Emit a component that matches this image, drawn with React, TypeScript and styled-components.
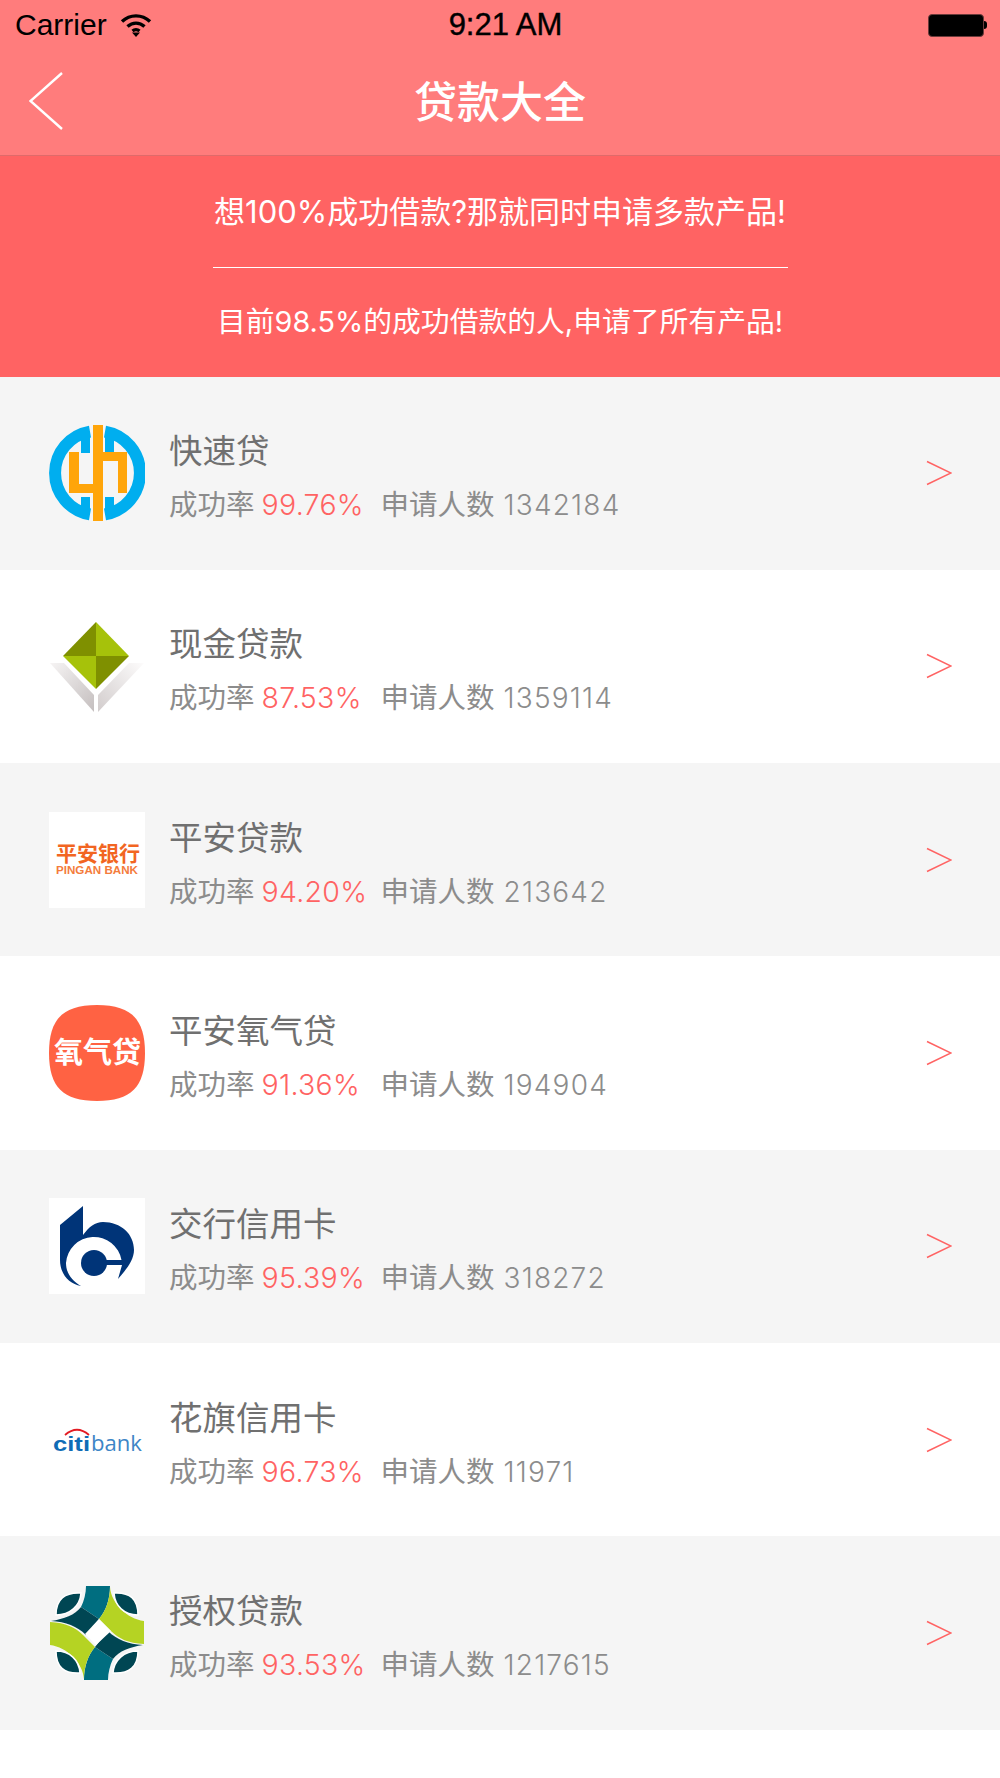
import { FC, ReactNode } from "react";
import styled, { createGlobalStyle } from "styled-components";

const CJK = `"Noto Sans CJK SC", sans-serif`;

const GlobalStyle = createGlobalStyle`
  html, body {
    margin: 0;
    padding: 0;
    background: #fff;
  }
`;

const Page = styled.div`
  width: 1000px;
  height: 1778px;
  overflow: hidden;
  background: #fff;
  font-family: Inter, ${CJK};
`;

const Header = styled.header`
  background: #ff7c7c;
  border-bottom: 1px solid #df6a6a;
`;

const StatusBar = styled.div`
  height: 50px;
  padding: 0 13px 0 15px;
  display: grid;
  grid-template-columns: 1fr auto 1fr;
  align-items: center;
  color: #000;
  font-family: "Liberation Sans", sans-serif;
  font-size: 30px;
`;

const Carrier = styled.div`
  display: flex;
  align-items: center;
  gap: 13px;
`;

const Clock = styled.div`
  font-size: 31px;
  margin-left: 9px;
  -webkit-text-stroke: 0.4px #000;
`;

const Battery = styled.div`
  justify-self: end;
  display: flex;
  align-items: center;
`;

const BatteryBody = styled.div`
  box-sizing: border-box;
  width: 56px;
  height: 23px;
  background: #000;
  border: 1px solid #6b3a3a;
  border-radius: 4px;
`;

const BatteryCap = styled.div`
  width: 3px;
  height: 8px;
  background: #000;
  border-radius: 0 3px 3px 0;
`;

const NavBar = styled.div`
  height: 105px;
  padding: 0 0 8px 29px;
  box-sizing: border-box;
  display: grid;
  grid-template-columns: 1fr auto 1fr;
  align-items: center;
`;

const BackSlot = styled.div`
  display: flex;
  padding-top: 5px;
`;

const Title = styled.h1`
  margin: 0;
  color: #fff;
  font-family: ${CJK};
  font-size: 43px;
  font-weight: 500;
  line-height: 60px;
  margin-left: -29px;
`;

const Banner = styled.section`
  box-sizing: border-box;
  height: 220.5px;
  padding-top: 27px;
  background: #ff6363;
  color: #fff;
  display: flex;
  flex-direction: column;
  align-items: center;
`;

const BannerLine = styled.div<{ $size: number }>`
  height: 58px;
  line-height: 58px;
  font-size: ${(p) => p.$size}px;
  font-weight: 400;
  white-space: nowrap;
`;

const Divider = styled.hr`
  width: 575px;
  height: 1px;
  margin: 26px 0 25px;
  border: 0;
  background: #fff;
`;

const List = styled.ul`
  margin: 0;
  padding: 0;
  list-style: none;
`;

const Row = styled.li`
  height: 193.33px;
  box-sizing: border-box;
  padding: 0 48px 0 49px;
  display: flex;
  align-items: center;
  &:nth-child(odd) {
    background: #f5f5f5;
  }
  &:nth-child(even) {
    background: #fff;
  }
`;

const Logo = styled.div`
  width: 96px;
  height: 96px;
  flex: none;
  svg {
    display: block;
  }
`;

const Info = styled.div`
  flex: 1;
  margin-left: 25px;
  padding-top: 8px;
`;

const Name = styled.div`
  color: #707070;
  font-family: ${CJK};
  font-size: 33.5px;
  line-height: 48px;
  margin-left: -1px;
`;

const Stats = styled.div`
  margin-top: 8px;
  display: flex;
  align-items: baseline;
  color: #8c8c8c;
  font-size: 28.5px;
  line-height: 48px;
  margin-left: -1px;
`;

const Rate = styled.span`
  width: 119px;
  color: #ff6363;
  margin-left: 7px;
  font-size: 28.5px;
  font-weight: 300;
  letter-spacing: 0.3px;
`;

const Count = styled.span`
  margin-left: 9px;
  font-size: 28px;
  font-weight: 300;
  letter-spacing: 1.2px;
`;

const WifiIcon = () => (
  <svg width="32" height="24" viewBox="0 0 32 24" fill="none" stroke="#000" strokeWidth="3.4">
    <path d="M2 8.5C10 1 22 1 30 8.5" />
    <path d="M7.5 13.5C12.5 9 19.5 9 24.5 13.5" />
    <path d="M12.5 18C14.5 16.4 17.5 16.4 19.5 18" />
    <path d="M16 24l-4-4.5h8z" fill="#000" stroke="none" />
  </svg>
);

const BackIcon = () => (
  <svg width="34" height="58" viewBox="0 0 34 58" fill="none" stroke="#fff" strokeWidth="2.4">
    <path d="M33 1L1.5 29L33 57" />
  </svg>
);

const ArrowIcon = () => (
  <svg width="26" height="26" viewBox="0 0 26 26" fill="none" stroke="#ff6363" strokeWidth="1.5">
    <path d="M1 1.5L25 13L1 24.5" />
  </svg>
);

const KuaisuLogo = () => (
  <svg width="96" height="96" viewBox="0 0 96 96">
    <g fill="none" stroke="#00aeef" strokeWidth="12">
      <path d="M41 6.6A42 42 0 0 0 41 89.4" />
      <path d="M56 6.6A42 42 0 0 1 56 89.4" />
    </g>
    <path
      fill="#00aeef"
      d="M32 8h9v20h-9zM32 72h9v16h-9zM56 8h9v20h-9zM56 72h9v16h-9z"
    />
    <path
      fill="#ffa50a"
      d="M44 0h10v27h24v41h-9V36H54v60H44V68H20V27h10v32h14z"
    />
  </svg>
);

const DiamondLogo = () => (
  <svg width="96" height="96" viewBox="0 0 96 96">
    <defs>
      <linearGradient id="wingL" x1="0" y1="0" x2="1" y2="1">
        <stop offset="0" stopColor="#f6f4f4" />
        <stop offset="1" stopColor="#c4bebe" />
      </linearGradient>
      <linearGradient id="wingR" x1="1" y1="0" x2="0" y2="1">
        <stop offset="0" stopColor="#fdfcfc" />
        <stop offset="1" stopColor="#d2cccc" />
      </linearGradient>
    </defs>
    <path fill="url(#wingL)" d="M1 45H15L45 77V94Z" />
    <path fill="url(#wingR)" d="M95 45H80L49 77V94Z" />
    <path fill="#7f9000" d="M47 4V38H14Z" />
    <path fill="#a6c20a" d="M47 4V38H80Z" />
    <path fill="#a6c20a" d="M14 38H47V71Z" />
    <path fill="#7f9000" d="M80 38H47V71Z" />
  </svg>
);

const PinganLogo = () => (
  <svg width="96" height="96" viewBox="0 0 96 96">
    <rect width="96" height="96" fill="#fff" />
    <text
      x="7"
      y="49"
      fill="#f26522"
      fontFamily={CJK}
      fontSize="21"
      fontWeight="700"
      textLength="84"
      lengthAdjust="spacingAndGlyphs"
    >
      平安银行
    </text>
    <text
      x="7"
      y="62"
      fill="#f47c3c"
      fontFamily="Liberation Sans, sans-serif"
      fontSize="10"
      fontWeight="700"
      textLength="82"
      lengthAdjust="spacingAndGlyphs"
    >
      PINGAN BANK
    </text>
  </svg>
);

const YangqiLogo = () => (
  <svg width="96" height="96" viewBox="0 0 96 96">
    <path
      fill="#ff6243"
      d="M48 0C82 0 96 14 96 48C96 82 82 96 48 96C14 96 0 82 0 48C0 14 14 0 48 0Z"
    />
    <text
      x="5"
      y="58"
      fill="#fff"
      fontFamily={CJK}
      fontSize="29"
      fontWeight="700"
      textLength="87"
      lengthAdjust="spacingAndGlyphs"
    >
      氧气贷
    </text>
  </svg>
);

const BocomLogo = () => (
  <svg width="96" height="96" viewBox="0 0 96 96">
    <rect width="96" height="96" fill="#fff" />
    <g fill="#003478">
      <path d="M11 27L34 8V37C40 29 46 24 54 24C72 24 85 36 85 52C85 62 77 72 69 81L73 67L72.5 62A28 28 0 0 0 17 65C17 75 23 83 32 88C20 86 11 76 11 62Z" />
      <circle cx="45" cy="65" r="13" />
      <path d="M56 62H73V67H56Z" />
    </g>
  </svg>
);

const CitiLogo = () => (
  <svg width="96" height="96" viewBox="0 0 96 96">
    <path d="M16 43C24 36 32 36 40 43" fill="none" stroke="#e31b23" strokeWidth="1.8" />
    <text
      x="4"
      y="59"
      fill="#0f6cb6"
      fontFamily="Liberation Sans, sans-serif"
      fontSize="21"
      fontWeight="700"
      textLength="37"
      lengthAdjust="spacingAndGlyphs"
    >
      citi
    </text>
    <text
      x="42"
      y="59"
      fill="#3d85c6"
      fontFamily="Open Sans, sans-serif"
      fontSize="21"
      fontWeight="400"
      textLength="51"
      lengthAdjust="spacingAndGlyphs"
    >
      bank
    </text>
  </svg>
);

const CrossHalf = () => (
  <>
    <path fill="#006e80" d="M37 1H61C61 14 57 26 50 34L32 22C35 16 37 8 37 1Z" />
    <path fill="#004653" d="M32 22L50 34L37 50C28 41 17 37 2 36C15 34 26 30 32 22Z" />
    <path fill="#b5d323" d="M61 2C62 18 78 34 95 36V59C79 58 70 54 62 46L50 34C57 26 61 14 61 2Z" />
    <g fill="#004653" stroke="#fff" strokeWidth="1.5">
      <path d="M32 8C16 7 7 14 7 30C21 30 31 21 32 8Z" />
      <path d="M65 8C81 7 89 14 89 30C75 30 66 21 65 8Z" />
    </g>
  </>
);

const CrossLogo = () => (
  <svg width="96" height="96" viewBox="0 0 96 96">
    <CrossHalf />
    <g transform="rotate(180 48 48)">
      <CrossHalf />
    </g>
    <path fill="#fff" d="M50 34L62 46L47 60L36 49Z" />
  </svg>
);

type Product = {
  name: string;
  rate: string;
  count: string;
  logo: ReactNode;
};

const products: Product[] = [
  { name: "快速贷", rate: "99.76%", count: "1342184", logo: <KuaisuLogo /> },
  { name: "现金贷款", rate: "87.53%", count: "1359114", logo: <DiamondLogo /> },
  { name: "平安贷款", rate: "94.20%", count: "213642", logo: <PinganLogo /> },
  { name: "平安氧气贷", rate: "91.36%", count: "194904", logo: <YangqiLogo /> },
  { name: "交行信用卡", rate: "95.39%", count: "318272", logo: <BocomLogo /> },
  { name: "花旗信用卡", rate: "96.73%", count: "11971", logo: <CitiLogo /> },
  { name: "授权贷款", rate: "93.53%", count: "1217615", logo: <CrossLogo /> },
];

const ProductRow: FC<{ product: Product }> = ({ product }) => (
  <Row>
    <Logo>{product.logo}</Logo>
    <Info>
      <Name>{product.name}</Name>
      <Stats>
        成功率<Rate>{product.rate}</Rate>申请人数<Count>{product.count}</Count>
      </Stats>
    </Info>
    <ArrowIcon />
  </Row>
);

export default function App() {
  return (
    <Page>
      <GlobalStyle />
      <Header>
        <StatusBar>
          <Carrier>
            Carrier
            <WifiIcon />
          </Carrier>
          <Clock>9:21 AM</Clock>
          <Battery>
            <BatteryBody />
            <BatteryCap />
          </Battery>
        </StatusBar>
        <NavBar>
          <BackSlot>
            <BackIcon />
          </BackSlot>
          <Title>贷款大全</Title>
        </NavBar>
      </Header>
      <Banner>
        <BannerLine $size={31}>想100%成功借款?那就同时申请多款产品!</BannerLine>
        <Divider />
        <BannerLine $size={28.8}>目前98.5%的成功借款的人,申请了所有产品!</BannerLine>
      </Banner>
      <List>
        {products.map((product) => (
          <ProductRow key={product.name} product={product} />
        ))}
      </List>
    </Page>
  );
}
